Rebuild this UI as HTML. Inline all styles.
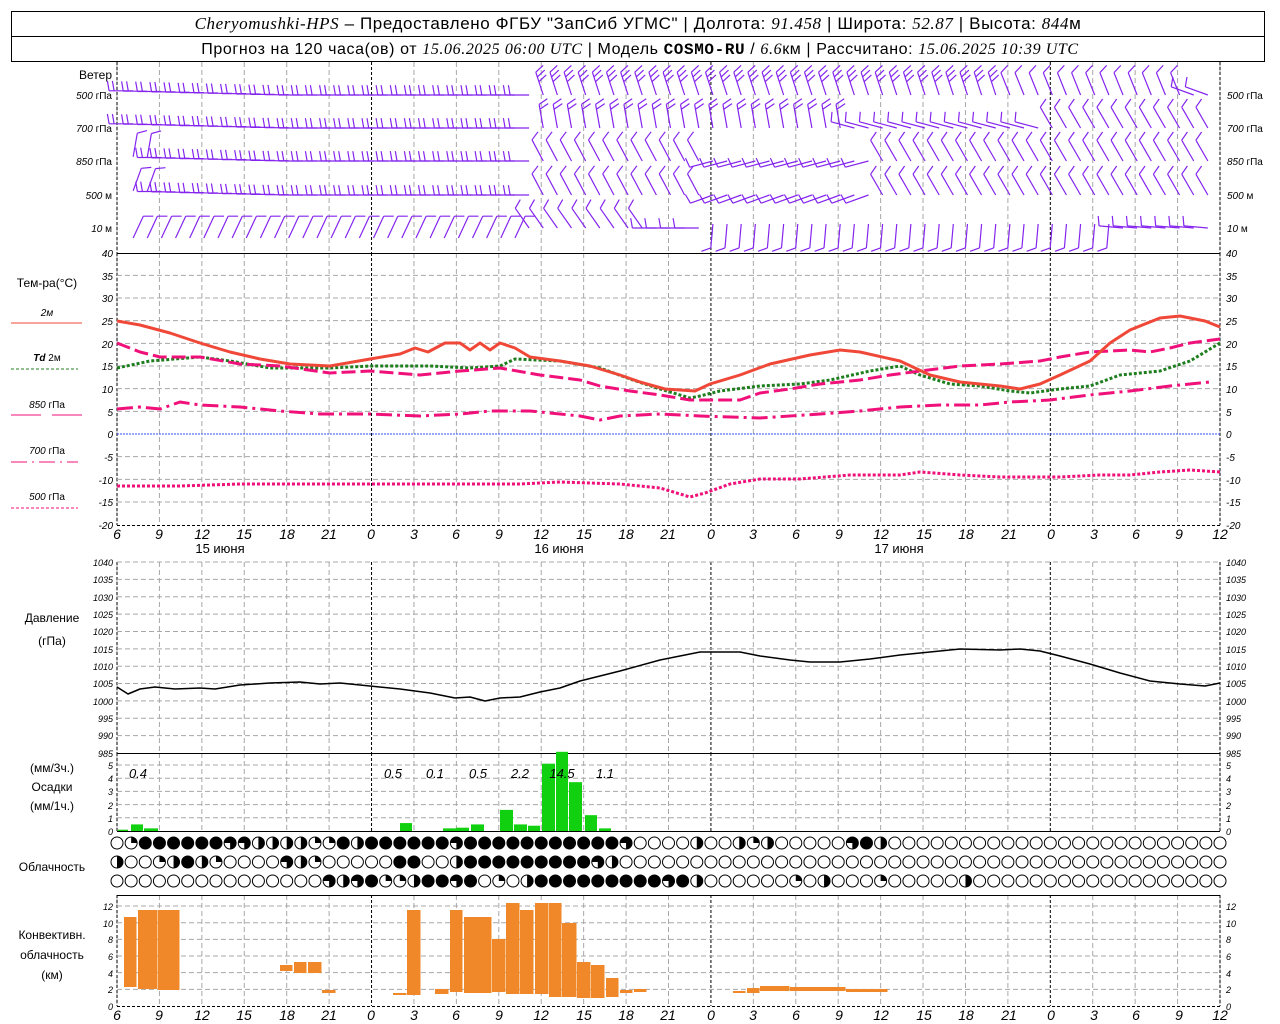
<!DOCTYPE html>
<html><head><meta charset="utf-8">
<style>
html,body{margin:0;padding:0;background:#fff;}
svg{display:block;font-family:"Liberation Sans","DejaVu Sans",sans-serif;}
.ax{font-size:10px;font-style:italic;fill:#000;}
.lb{font-size:12px;fill:#000;}
</style></head><body>
<svg id="s" width="1280" height="1024" viewBox="0 0 1280 1024" xmlns="http://www.w3.org/2000/svg">
<rect width="1280" height="1024" fill="#fff"/>
<g id="grid"></g>
<g id="gen"></g>
<!-- header -->
<rect x="11.5" y="11.5" width="1253" height="50" fill="none" stroke="#000"/>
<line x1="11" y1="36.5" x2="1265" y2="36.5" stroke="#000"/>
<text x="638" y="29" text-anchor="middle" style="font-size:17px;letter-spacing:0.6px"><tspan font-style="italic" font-family="Liberation Serif">Cheryomushki-HPS</tspan> – Предоставлено ФГБУ "ЗапСиб УГМС" | Долгота: <tspan font-style="italic" font-family="Liberation Serif">91.458</tspan> | Широта: <tspan font-style="italic" font-family="Liberation Serif">52.87</tspan> | Высота: <tspan font-style="italic" font-family="Liberation Serif">844</tspan>м</text>
<text x="640" y="54" text-anchor="middle" style="font-size:16px;letter-spacing:0.6px">Прогноз на 120 часа(ов) от <tspan font-style="italic" font-family="Liberation Serif">15.06.2025 06:00 UTC</tspan> | Модель <tspan font-weight="bold" font-family="Liberation Mono">COSMO-RU</tspan> / <tspan font-style="italic" font-family="Liberation Serif">6.6</tspan>км | Рассчитано: <tspan font-style="italic" font-family="Liberation Serif">15.06.2025 10:39 UTC</tspan></text>

<!-- wind labels -->
<text class="lb" x="112" y="79" text-anchor="end">Ветер</text>
<g class="ax" text-anchor="end">
<text x="112" y="99">500 <tspan font-style="normal">гПа</tspan></text>
<text x="112" y="132">700 <tspan font-style="normal">гПа</tspan></text>
<text x="112" y="165">850 <tspan font-style="normal">гПа</tspan></text>
<text x="112" y="199">500 <tspan font-style="normal">м</tspan></text>
<text x="112" y="232">10 <tspan font-style="normal">  м</tspan></text>
</g>
<g class="ax">
<text x="1227" y="99">500 <tspan font-style="normal">гПа</tspan></text>
<text x="1227" y="132">700 <tspan font-style="normal">гПа</tspan></text>
<text x="1227" y="165">850 <tspan font-style="normal">гПа</tspan></text>
<text x="1227" y="199">500 <tspan font-style="normal">м</tspan></text>
<text x="1227" y="232">10 <tspan font-style="normal">  м</tspan></text>
</g>

<!-- temp legend -->
<text class="lb" x="47" y="287" text-anchor="middle">Тем-ра(°C)</text>
<text class="ax" x="47" y="316" text-anchor="middle" font-style="normal">2м</text>
<line x1="11" y1="323" x2="82" y2="323" stroke="#f04838" stroke-width="1"/>
<text class="ax" x="47" y="361" text-anchor="middle"><tspan font-weight="bold">Td</tspan>  <tspan font-style="normal">2м</tspan></text>
<line x1="11" y1="369" x2="78" y2="369" stroke="#208020" stroke-dasharray="3,2"/>
<text class="ax" x="47" y="408" text-anchor="middle">850 <tspan font-style="normal">гПа</tspan></text>
<line x1="11" y1="415" x2="41" y2="415" stroke="#f0107a"/><line x1="52" y1="415" x2="82" y2="415" stroke="#f0107a"/>
<text class="ax" x="47" y="454" text-anchor="middle">700 <tspan font-style="normal">гПа</tspan></text>
<line x1="11" y1="462" x2="78" y2="462" stroke="#f0107a" stroke-dasharray="16,5,2,5"/>
<text class="ax" x="47" y="500" text-anchor="middle">500 <tspan font-style="normal">гПа</tspan></text>
<line x1="11" y1="508" x2="78" y2="508" stroke="#f0107a" stroke-dasharray="3,2"/>

<!-- other left labels -->
<text class="lb" x="52" y="622" text-anchor="middle">Давление</text>
<text class="lb" x="52" y="645" text-anchor="middle">(гПа)</text>
<text class="lb" x="52" y="772" text-anchor="middle">(мм/3ч.)</text>
<text class="lb" x="52" y="791" text-anchor="middle">Осадки</text>
<text class="lb" x="52" y="810" text-anchor="middle">(мм/1ч.)</text>
<text class="lb" x="52" y="871" text-anchor="middle">Облачность</text>
<text class="lb" x="52" y="939" text-anchor="middle">Конвективн.</text>
<text class="lb" x="52" y="959" text-anchor="middle">облачность</text>
<text class="lb" x="52" y="979" text-anchor="middle">(км)</text>

<!-- temp axis labels -->
<g class="ax" text-anchor="end">
<text x="113" y="257">40</text><text x="113" y="280">35</text><text x="113" y="302">30</text><text x="113" y="325">25</text><text x="113" y="348">20</text><text x="113" y="370">15</text><text x="113" y="393">10</text><text x="113" y="416">5</text><text x="113" y="438">0</text><text x="113" y="461">-5</text><text x="113" y="484">-10</text><text x="113" y="506">-15</text><text x="113" y="529">-20</text>
</g>
<g class="ax">
<text x="1226" y="257">40</text><text x="1226" y="280">35</text><text x="1226" y="302">30</text><text x="1226" y="325">25</text><text x="1226" y="348">20</text><text x="1226" y="370">15</text><text x="1226" y="393">10</text><text x="1226" y="416">5</text><text x="1226" y="438">0</text><text x="1226" y="461">-5</text><text x="1226" y="484">-10</text><text x="1226" y="506">-15</text><text x="1226" y="529">-20</text>
</g>
<g style="font-size:14px;font-style:italic" text-anchor="middle">
<text x="117" y="539">6</text><text x="159" y="539">9</text><text x="202" y="539">12</text><text x="244" y="539">15</text><text x="287" y="539">18</text><text x="329" y="539">21</text><text x="371" y="539">0</text><text x="414" y="539">3</text><text x="456" y="539">6</text><text x="499" y="539">9</text><text x="541" y="539">12</text><text x="584" y="539">15</text><text x="626" y="539">18</text><text x="668" y="539">21</text><text x="711" y="539">0</text><text x="753" y="539">3</text><text x="796" y="539">6</text><text x="839" y="539">9</text><text x="881" y="539">12</text><text x="924" y="539">15</text><text x="966" y="539">18</text><text x="1009" y="539">21</text><text x="1051" y="539">0</text><text x="1094" y="539">3</text><text x="1136" y="539">6</text><text x="1179" y="539">9</text><text x="1220" y="539">12</text>
</g>
<g class="lb" text-anchor="middle" style="font-size:13px">
<text x="220" y="553">15 июня</text><text x="559" y="553">16 июня</text><text x="899" y="553">17 июня</text>
</g>
<g style="font-size:14px;font-style:italic" text-anchor="middle">
<text x="117" y="1020">6</text><text x="159" y="1020">9</text><text x="202" y="1020">12</text><text x="244" y="1020">15</text><text x="287" y="1020">18</text><text x="329" y="1020">21</text><text x="371" y="1020">0</text><text x="414" y="1020">3</text><text x="456" y="1020">6</text><text x="499" y="1020">9</text><text x="541" y="1020">12</text><text x="584" y="1020">15</text><text x="626" y="1020">18</text><text x="668" y="1020">21</text><text x="711" y="1020">0</text><text x="753" y="1020">3</text><text x="796" y="1020">6</text><text x="839" y="1020">9</text><text x="881" y="1020">12</text><text x="924" y="1020">15</text><text x="966" y="1020">18</text><text x="1009" y="1020">21</text><text x="1051" y="1020">0</text><text x="1094" y="1020">3</text><text x="1136" y="1020">6</text><text x="1179" y="1020">9</text><text x="1220" y="1020">12</text>
</g>
<!-- pressure labels -->
<g class="ax" text-anchor="end" style="font-size:9px">
<text x="113" y="566">1040</text><text x="113" y="583">1035</text><text x="113" y="601">1030</text><text x="113" y="618">1025</text><text x="113" y="635">1020</text><text x="113" y="653">1015</text><text x="113" y="670">1010</text><text x="113" y="687">1005</text><text x="113" y="705">1000</text><text x="113" y="722">995</text><text x="113" y="739">990</text><text x="113" y="757">985</text>
<text x="113" y="769">5</text><text x="113" y="782">4</text><text x="113" y="795">3</text><text x="113" y="809">2</text><text x="113" y="822">1</text><text x="113" y="835">0</text>
<text x="113" y="910">12</text><text x="113" y="927">10</text><text x="113" y="943">8</text><text x="113" y="960">6</text><text x="113" y="977">4</text><text x="113" y="993">2</text><text x="113" y="1010">0</text>
</g>
<g class="ax" style="font-size:9px">
<text x="1226" y="566">1040</text><text x="1226" y="583">1035</text><text x="1226" y="601">1030</text><text x="1226" y="618">1025</text><text x="1226" y="635">1020</text><text x="1226" y="653">1015</text><text x="1226" y="670">1010</text><text x="1226" y="687">1005</text><text x="1226" y="705">1000</text><text x="1226" y="722">995</text><text x="1226" y="739">990</text><text x="1226" y="757">985</text>
<text x="1226" y="769">5</text><text x="1226" y="782">4</text><text x="1226" y="795">3</text><text x="1226" y="809">2</text><text x="1226" y="822">1</text><text x="1226" y="835">0</text>
<text x="1226" y="910">12</text><text x="1226" y="927">10</text><text x="1226" y="943">8</text><text x="1226" y="960">6</text><text x="1226" y="977">4</text><text x="1226" y="993">2</text><text x="1226" y="1010">0</text>
</g>
<!-- precip amounts -->
<g style="font-size:13px;font-style:italic" text-anchor="middle">
<text x="138" y="778">0.4</text><text x="393" y="778">0.5</text><text x="435" y="778">0.1</text><text x="478" y="778">0.5</text><text x="520" y="778">2.2</text><text x="562" y="778">14.5</text><text x="605" y="778">1.1</text>
</g>
</svg>
<script>
(function(){
var NS="http://www.w3.org/2000/svg";
var g=document.getElementById('gen'),gr=document.getElementById('grid');
function el(p,t,a){var e=document.createElementNS(NS,t);for(var k in a)e.setAttribute(k,a[k]);p.appendChild(e);return e;}
function X(h){return 117+14.141*h;}
var panels=[[62,253],[253,525],[562,753],[753,831],[895,1006]];
for(var h=0;h<=78;h+=3){var x=X(h);var mid=(h==18||h==42||h==66);
 panels.forEach(function(p){el(gr,'line',{x1:x,y1:p[0],x2:x,y2:p[1],stroke:mid?'#000':'#a8a8a8','stroke-dasharray':mid?'3,2':'5,3','stroke-width':1});});}
[117,1220].forEach(function(x){panels.forEach(function(p){el(gr,'line',{x1:x,y1:p[0],x2:x,y2:p[1],stroke:'#000','stroke-dasharray':'3,2'});});});
for(var v=-15;v<40;v+=5){var y=434-4.533*v;el(gr,'line',{x1:117,y1:y,x2:1220,y2:y,stroke:v==0?'#3050ff':'#a8a8a8','stroke-dasharray':v==0?'2,1':'5,3'});}
for(var p=990;p<=1040;p+=5){var y=562+(1040-p)*3.473;el(gr,'line',{x1:117,y1:y,x2:1220,y2:y,stroke:'#a8a8a8','stroke-dasharray':'5,3'});}
for(var k=1;k<=5;k++){var y=831-13.2*k;el(gr,'line',{x1:117,y1:y,x2:1220,y2:y,stroke:'#a8a8a8','stroke-dasharray':'5,3'});}
for(var k=1;k<=6;k++){var y=1006-8.33*2*k;el(gr,'line',{x1:117,y1:y,x2:1220,y2:y,stroke:'#a8a8a8','stroke-dasharray':'5,3'});}
[253,753,831,895].forEach(function(y){el(g,'line',{x1:117,y1:y+0.5,x2:1220,y2:y+0.5,stroke:'#000'});});
[525,1006].forEach(function(y){el(g,'line',{x1:117,y1:y+0.5,x2:1220,y2:y+0.5,stroke:'#000','stroke-dasharray':'3,2'});});
function poly(pts,st,w,da){el(g,'polyline',{points:pts,fill:'none',stroke:st,'stroke-width':w,'stroke-dasharray':da||'none','stroke-linejoin':'round'});}
poly("117,368 150,361 200,357 230,361 270,368 330,368 370,366 430,366 470,368 500,366 515,359 560,361 600,368 630,379 660,389 690,398 700,396 720,391 760,386 800,384 830,380 870,371 900,366 920,375 950,384 980,386 1010,391 1030,393 1060,389 1090,386 1120,375 1160,371 1190,361 1220,343","#1e7e1e",3,"3,2");
poly("117,409 140,407 160,409 180,402 200,405 240,407 280,411 320,414 370,414 420,416 460,414 490,411 530,411 580,416 600,420 620,416 660,414 700,416 760,418 820,414 860,411 900,407 940,405 980,405 1010,402 1050,400 1090,395 1130,391 1170,386 1210,382","#f0107a",3,"16,5,3,5");
poly("117,343 140,352 160,357 200,357 240,364 280,366 330,373 370,371 420,375 460,371 500,368 540,375 580,380 600,386 630,391 660,395 690,400 740,400 760,393 790,389 820,384 860,380 890,375 920,371 960,366 1000,364 1040,361 1060,357 1090,352 1130,350 1150,352 1170,348 1190,343 1220,339","#f0107a",3,"14,5");
poly("117,486 180,486 240,484 320,484 440,484 520,484 560,482 620,484 660,488 690,497 705,493 730,484 760,479 800,479 850,475 900,475 920,472 960,475 1000,477 1060,477 1100,475 1130,475 1160,472 1190,470 1220,472","#f0107a",3,"3,2");
poly("117,321 140,325 170,333 200,343 230,352 260,359 290,364 330,366 370,359 400,354 415,348 428,352 445,343 460,343 470,350 480,343 490,350 500,343 515,348 530,357 560,361 590,366 620,375 640,382 665,389 695,391 710,384 740,375 770,364 810,355 840,350 860,352 900,361 930,375 960,382 1000,386 1020,389 1040,384 1060,375 1090,361 1110,343 1130,330 1160,318 1180,316 1205,321 1220,327","#f04838",3);
poly("117,687 128,694 140,689 155,687 175,689 200,688 215,689 240,685 270,683 300,682 320,684 340,683 370,686 400,689 430,693 455,698 470,697 485,701 500,698 520,697 540,692 560,688 580,681 620,671 660,660 700,652 740,652 760,656 790,660 810,662 840,662 870,659 900,655 930,652 960,649 1000,650 1020,649 1040,651 1060,656 1090,664 1120,673 1150,681 1180,684 1205,686 1220,683","#000",1.5);
[[118,128,0.1],[131,143,0.5],[144,158,0.2],[400,412,0.6],[443,456,0.2],[456,469,0.25],[471,484,0.5],[500,513,1.6],[514,527,0.5],[528,540,0.4],[542,555,5.1],[556,568,6],[569,582,3.7],[585,597,1.2],[599,611,0.2]].forEach(function(b){
 var h=b[2]*13.2;el(g,'rect',{x:b[0],y:831-h,width:b[1]-b[0],height:h,fill:'#10d010'});});
[[124,137,917,987],[138,158,910,989],[158,180,910,990],[280,293,965,971],[294,307,962,973],[308,322,962,973],[322,336,990,993],[393,407,993,995],[407,421,910,995],[435,449,989,994],[450,463,910,992],[464,492,917,993],[492,506,939,992],[506,520,903,994],[520,534,910,994],[535,549,903,994],[549,562,903,997],[562,577,923,997],[577,591,962,998],[591,605,965,998],[606,619,978,997],[620,633,990,993],[634,647,989,992],[733,746,991,993],[747,760,988,993],[760,790,986,991],[790,846,987,991],[846,888,989,992]].forEach(function(b){
 el(g,'rect',{x:b[0],y:b[2],width:b[1]-b[0]-0.5,height:b[3]-b[2],fill:'#f0882a'});});
var rows=["0144444433222211424444443444444444443000020021200000342000000000000000000000000",
          "2001242100003210000044002444444444320000000000000000000000000000000000000000000",
          "0000000000000003234112443401024444444443420000001020001000002000000000000000000"];
var ry=[843,862,881];
rows.forEach(function(r,ri){for(var i=0;i<79;i++){var cx=X(i),cy=ry[ri],t=+(r[i]||0),R=6;
 el(g,'circle',{cx:cx,cy:cy,r:R,fill:t==4?'#000':'#fff',stroke:'#000','stroke-width':1});
 if(t==1)el(g,'path',{d:'M'+cx+' '+cy+'V'+(cy-R)+'A'+R+' '+R+' 0 0 1 '+(cx+R)+' '+cy+'Z',fill:'#000'});
 if(t==2)el(g,'path',{d:'M'+cx+' '+(cy-R)+'A'+R+' '+R+' 0 0 1 '+cx+' '+(cy+R)+'Z',fill:'#000'});
 if(t==3)el(g,'path',{d:'M'+cx+' '+cy+'H'+(cx-R)+'A'+R+' '+R+' 0 1 1 '+cx+' '+(cy+R)+'Z',fill:'#000'});
}});
var C='#8424ee';
function barb(x,y,a,n){var r=a*Math.PI/180,L=24,ex=x+L*Math.cos(r),ey=y+L*Math.sin(r);
 var d='M'+x+' '+y+'L'+ex.toFixed(1)+' '+ey.toFixed(1);
 var ta=(Math.abs(a)>=150)?a+80:a+65;var tr=ta*Math.PI/180;
 for(var k=0;k<n;k++){var bx=x+(L-k*5)*Math.cos(r),by=y+(L-k*5)*Math.sin(r);
  d+='M'+bx.toFixed(1)+' '+by.toFixed(1)+'l'+(10*Math.cos(tr)).toFixed(1)+' '+(10*Math.sin(tr)).toFixed(1);}
 el(g,'path',{d:d,stroke:C,fill:'none','stroke-width':1.2});}
var lv=[
 [95,[[540,180,2],[1000,-108,3],[1180,-112,1],[1300,200,1]]],
 [128,[[540,180,2],[850,-100,2],[1050,195,1],[1300,-120,1]]],
 [161,[[160,-80,1],[540,180,2],[700,-118,1],[880,165,1],[1300,-120,1]]],
 [195,[[160,-70,1],[540,180,2],[700,-118,1],[880,160,1],[1300,-120,1]]],
 [228,[[520,-65,1],[650,-125,1],[700,180,1],[1110,95,1],[1300,185,1]]]];
lv.forEach(function(L){var y=L[0];for(var i=1;i<78;i++){var x=X(i)+2;var s=L[1].find(function(q){return x<q[0];});
 var yy=y+(x<540&&y<200?-Math.max(0,(300-x))/40:0);
 if(y==228&&x<520)yy=238;
 if(y==228&&x>700&&x<1110)yy=y-4;
 barb(x,yy,s[1],s[2]);}});
})();
</script>
</body></html>
